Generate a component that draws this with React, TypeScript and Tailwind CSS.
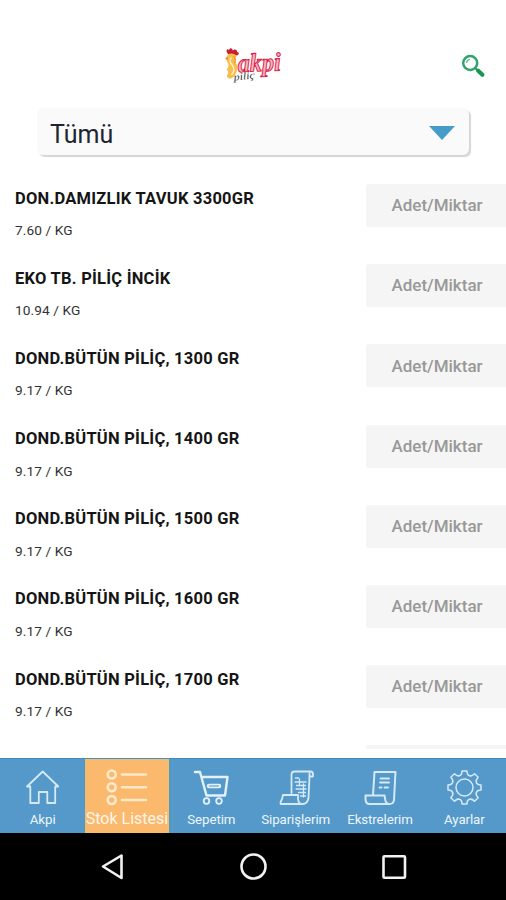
import type { ReactNode } from 'react';

const products = [
  { id: 1, name: 'DON.DAMIZLIK TAVUK 3300GR', price: '7.60 / KG' },
  { id: 2, name: 'EKO TB. PİLİÇ İNCİK', price: '10.94 / KG' },
  { id: 3, name: 'DOND.BÜTÜN PİLİÇ, 1300 GR', price: '9.17 / KG' },
  { id: 4, name: 'DOND.BÜTÜN PİLİÇ, 1400 GR', price: '9.17 / KG' },
  { id: 5, name: 'DOND.BÜTÜN PİLİÇ, 1500 GR', price: '9.17 / KG' },
  { id: 6, name: 'DOND.BÜTÜN PİLİÇ, 1600 GR', price: '9.17 / KG' },
  { id: 7, name: 'DOND.BÜTÜN PİLİÇ, 1700 GR', price: '9.17 / KG' },
];

function Logo() {
  return (
    <svg width="60" height="40" viewBox="0 0 60 40">
      {/* Rooster */}
      <path d="M4.5 8.5C2.5 5.5 4 3 6 5C7 2 9.5 3 9.8 5.5C12 3.5 14.5 5 14 7C16.5 7.2 16.5 9.5 14 10.5L6 9.8Z" fill="#c9202f" />
      <path d="M5 9.5C7.5 7.5 12.5 8.5 13.5 11C12 13.5 12 17 14 20C15 25 13 31 8 33.5C5.5 34 4 32.5 3.8 30.5C6 28 5.5 26 3.5 24.5C6 22 6 20 4.5 17.5C2.5 15 3 12 5 9.5Z" fill="#f9bd4c" />
      <path d="M8.5 12.5C6 15 7 18 9.5 20.5C11.5 23 11.5 27 8.5 30" fill="none" stroke="#fff0c4" strokeWidth="1.6" />
      <path d="M4.5 11.5L1.8 14L5 14.5" fill="#f08a2c" />
      <path d="M11 11.5C13 14 12.5 17 11.5 18" fill="none" stroke="#e8872b" strokeWidth="1" />
      <text
        x="15"
        y="27"
        transform="rotate(-2 15 27)"
        textLength="43"
        lengthAdjust="spacingAndGlyphs"
        fill="#f9b6c4"
        stroke="#d81b43"
        strokeWidth="1"
        className="font-['Liberation_Serif',serif] text-[26px] font-bold italic"
      >
        akpi
      </text>
      <text
        x="11"
        y="35.5"
        transform="rotate(-6 11 35)"
        textLength="21"
        lengthAdjust="spacingAndGlyphs"
        fill="#333333"
        className="font-['Liberation_Serif',serif] text-[10px] italic"
      >
        piliç
      </text>
    </svg>
  );
}

function SearchIcon() {
  return (
    <svg width="24" height="24" viewBox="0 0 24 24" fill="none">
      <circle cx="9.2" cy="9" r="7" stroke="#2fa56b" strokeWidth="2.5" />
      <path d="M5.5 9A4 4 0 0 1 9 5.4" stroke="#5dbb8c" strokeWidth="1.2" />
      <path d="M14.4 14.2L17 17" stroke="#27a065" strokeWidth="2" />
      <path d="M17.2 16.7L21.4 20.8" stroke="#189455" strokeWidth="4" strokeLinecap="round" />
    </svg>
  );
}

// Every tab icon is drawn on the same 44x40 grid
function TabIcon({ children }: { children: ReactNode }) {
  return (
    <svg
      width="44"
      height="40"
      viewBox="0 0 44 40"
      fill="none"
      stroke="#d6e9f7"
      strokeWidth="1.8"
      strokeLinejoin="round"
      strokeLinecap="round"
    >
      {children}
    </svg>
  );
}

const tabs = [
  {
    name: 'Akpi',
    icon: (
      <path d="M6 18.5L21.7 3.5L37.3 18.5H34.2V35H26.3V24H17.8V35H9.3V18.5Z" />
    ),
  },
  {
    name: 'Stok Listesi',
    active: true,
    icon: (
      <g stroke="#ffe9cd" strokeWidth="2.6">
        <circle cx="6.7" cy="6.5" r="4" />
        <circle cx="6.7" cy="19.2" r="4" />
        <circle cx="6.7" cy="32" r="4" />
        <path d="M17 6.5H41M17 19.2H41M17 32H41" />
      </g>
    ),
  },
  {
    name: 'Sepetim',
    icon: (
      <g stroke="#e4f1fb">
        <path d="M6 4H11L17.5 27.5H36L38.5 9H12.5" strokeWidth="2.4" />
        <circle cx="17.5" cy="33" r="2.8" />
        <circle cx="30" cy="33" r="2.8" />
        <path d="M20 18H30" strokeWidth="4.5" />
        <path d="M20.5 18H29.5" stroke="#80b4dc" strokeWidth="1.4" />
      </g>
    ),
  },
  {
    name: 'Siparişlerim',
    icon: (
      <g>
        <path d="M17.5 25V6.5Q17.5 3.5 20.5 3.5H37Q39.5 4 39 8.5H35.5L34.5 30Q33.5 36 28.5 36H7Q5.5 36 8 31L9 27H24V31Q24.5 36 28.5 36" />
        <path d="M35.5 8.5V5" />
        <path d="M21.5 10H24.5M21 14H32M22.5 17.5H31.5M22 21H32M24.5 24.5H31.5M26.5 28H31.5M25.5 11V17M29.5 16V29" strokeWidth="1.3" />
      </g>
    ),
  },
  {
    name: 'Ekstrelerim',
    icon: (
      <g>
        <path d="M15 27L16.5 4H37.5L36 32Q35.5 36 31.5 36H11Q7.5 35.5 7.5 31V27.5H26.5L27.5 33Q28.5 36 31.5 36" strokeWidth="2" />
        <path d="M22.5 10.5H31M22 14.5H31M21.5 19.5H23.5M26.5 19.5H30" strokeWidth="1.8" />
      </g>
    ),
  },
  {
    name: 'Ayarlar',
    icon: (
      <g strokeWidth="1.5">
        <circle cx="22.5" cy="19.5" r="8.5" />
        <path d="M20 3H25Q25 7 27.5 7.7Q30 8.5 32.5 5.7L36.2 9.3Q33.5 12 34.3 14.5Q35.2 17 39 17V22Q35.2 22 34.3 24.5Q33.5 27 36.2 29.7L32.5 33.3Q30 30.5 27.5 31.3Q25 32 25 36H20Q20 32 17.5 31.3Q15 30.5 12.5 33.3L8.8 29.7Q11.5 27 10.7 24.5Q9.8 22 6 22V17Q9.8 17 10.7 14.5Q11.5 12 8.8 9.3L12.5 5.7Q15 8.5 17.5 7.7Q20 7 20 3Z" />
      </g>
    ),
  },
];

export default function App() {
  return (
    <div className="flex h-[900px] w-[506px] flex-col overflow-hidden bg-white font-[Roboto,sans-serif]">
      {/* Header */}
      <header className="grid h-[108px] shrink-0 grid-cols-3 items-start pt-[45px]">
        <span />
        <div className="flex justify-center">
          <Logo />
        </div>
        <button className="mt-[9px] mr-[21px] justify-self-end">
          <SearchIcon />
        </button>
      </header>

      {/* Category select */}
      <button className="mr-[37px] ml-[37px] flex h-[47px] shrink-0 items-center justify-between rounded-md bg-[#fafafa] pr-[14px] pl-[13px] shadow-[2px_2px_1px_#d6d6d6]">
        <span className="mt-[5px] text-[25px] leading-none text-[#1e2530]">Tümü</span>
        <svg width="26" height="14" viewBox="0 0 26 14" className="mt-0.5">
          <path d="M0 0H26L13 14Z" fill="#459cc8" />
        </svg>
      </button>

      {/* Product list */}
      <ul className="mt-[29px] h-[565px] shrink-0 overflow-hidden">
        {products.map((product) => (
          <li key={product.id} className="flex h-[80.2px] items-start justify-between">
            <div className="pt-[4.5px] pl-[15px]">
              <p className="text-[16.5px] leading-5 font-bold tracking-[0.24px] whitespace-nowrap text-[#151515]">
                {product.name}
              </p>
              <p className="mt-[12.5px] text-[13.7px] leading-[18px] tracking-[0.1px] text-[#333333]">{product.price}</p>
            </div>
            <div className="flex h-[43px] w-[140px] items-center justify-center rounded-l-[3px] bg-[#f5f5f5] pt-px pl-[2px] text-[17px] font-medium text-[#989898]">
              Adet/Miktar
            </div>
          </li>
        ))}
        <li className="ml-auto h-[43px] w-[140px] rounded-l-[3px] bg-[#f5f5f5]" />
      </ul>

      {/* Tab bar */}
      <nav className="mt-[9px] grid h-[75px] shrink-0 grid-cols-6 border-t border-[#3c90c5] bg-[#5499ca]">
        {tabs.map((tab) => (
          <button
            key={tab.name}
            className={
              tab.active
                ? '-mr-px flex flex-col items-center border-x border-x-[#4a9cb8] bg-[#fbb96e] pt-[9px] text-[16px] text-[#fff6e9]'
                : 'flex flex-col items-center pt-[9px] pl-px text-[13.3px] text-[#eef6fc]'
            }
          >
            <TabIcon>{tab.icon}</TabIcon>
            <span className={tab.active ? 'mt-[2px] leading-[18px] whitespace-nowrap' : 'mt-[3px] leading-[18px] tracking-[-0.1px] whitespace-nowrap'}>
              {tab.name}
            </span>
          </button>
        ))}
      </nav>

      {/* System navigation */}
      <div className="flex h-[67px] shrink-0 items-center justify-between bg-black px-[98px]">
        <svg width="30" height="30" viewBox="0 0 30 30" fill="none" stroke="#f2f2f2" strokeWidth="2.6" strokeLinejoin="round">
          <path d="M5 14.5L23.5 3.5V26Z" />
        </svg>
        <svg width="30" height="30" viewBox="0 0 30 30" fill="none" stroke="#f2f2f2" strokeWidth="2.6">
          <circle cx="15.5" cy="14.5" r="12" />
        </svg>
        <svg width="30" height="30" viewBox="0 0 30 30" fill="none" stroke="#f2f2f2" strokeWidth="2.6">
          <rect x="5.5" y="4.3" width="21.5" height="21.5" rx="1" />
        </svg>
      </div>
    </div>
  );
}
